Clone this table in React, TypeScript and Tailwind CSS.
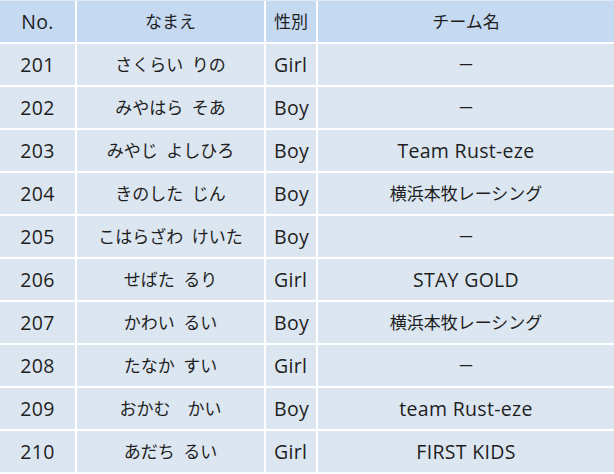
import clsx from 'clsx';

const rows: [string, string, string, string][] = [
  ['201', 'さくらい\u2002りの', 'Girl', '－'],
  ['202', 'みやはら\u2002そあ', 'Boy', '－'],
  ['203', 'みやじ\u2002よしひろ', 'Boy', 'Team Rust-eze'],
  ['204', 'きのした\u2002じん', 'Boy', '横浜本牧レーシング'],
  ['205', 'こはらざわ\u2002けいた', 'Boy', '－'],
  ['206', 'せばた\u2002るり', 'Girl', 'STAY GOLD'],
  ['207', 'かわい\u2002るい', 'Boy', '横浜本牧レーシング'],
  ['208', 'たなか\u2002すい', 'Girl', '－'],
  ['209', 'おかむ　かい', 'Boy', 'team Rust-eze'],
  ['210', 'あだち\u2002るい', 'Girl', 'FIRST KIDS'],
];

const head = ['No.', 'なまえ', '性別', 'チーム名'];

const isLatin = (s: string) => /^[\x20-\x7E]+$/.test(s);

function Cell({ text, col, header }: { text: string; col: number; header?: boolean }) {
  const latin = isLatin(text);
  return (
    <div
      className={clsx(
        'flex items-center whitespace-pre',
        header ? 'bg-[#c5d9f1]' : 'bg-[#dce6f1]',
        col === 2 ? 'justify-start pl-[8px]' : 'justify-center',
        latin ? 'text-[19.5px] tracking-[0.3px]' : 'text-[17px]'
      )}
    >
      {text}
    </div>
  );
}

export default function App() {
  return (
    <div
      className="w-[614px] h-[474px] overflow-hidden bg-white text-[#1e1e1e]"
      style={{ fontFamily: '"Open Sans", "Noto Sans CJK JP", sans-serif' }}
    >
      <div className="grid grid-cols-[75px_187px_50px_1fr] auto-rows-[41px] gap-[2px] border-t border-[#dfe8f3]">
        {head.map((h, i) => (
          <Cell key={h} text={h} col={i} header />
        ))}
        {rows.map((r) => r.map((c, i) => <Cell key={r[0] + i} text={c} col={i} />))}
      </div>
    </div>
  );
}
